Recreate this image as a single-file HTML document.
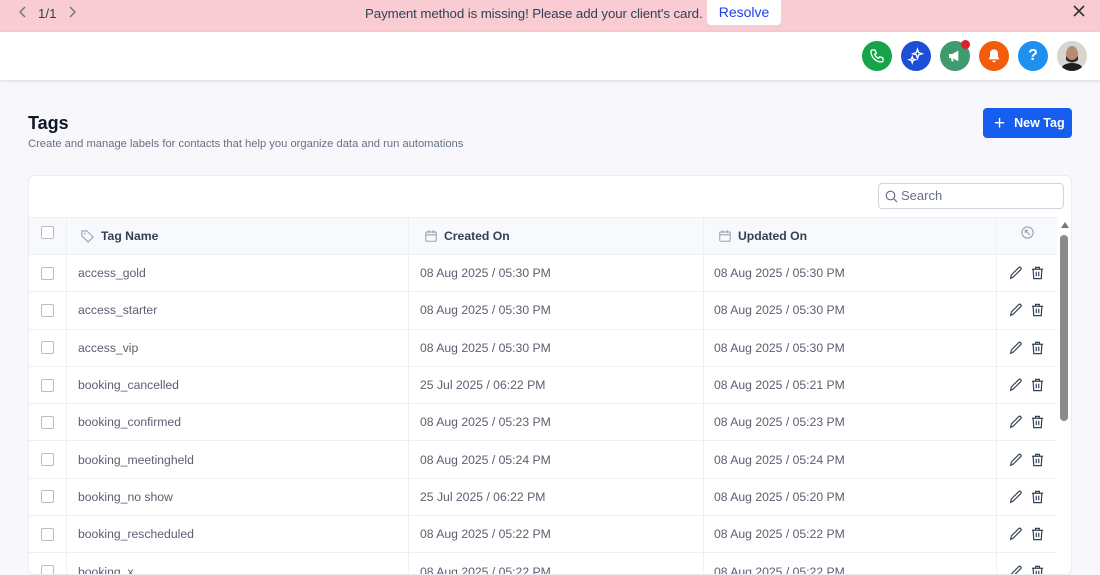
<!DOCTYPE html>
<html><head><meta charset="utf-8"><style>
*{box-sizing:border-box;margin:0;padding:0}
body{width:1100px;height:547px;overflow:hidden;background:#f8f8fc;font-family:"Liberation Sans",sans-serif;position:relative;color:#101828}
.banner{position:absolute;left:0;top:0;width:1100px;height:32px;background:#f9cbd2;font-size:13.3px;color:#344054}
.hdr{position:absolute;left:0;top:32px;width:1100px;height:48px;background:#fff;box-shadow:0 1px 3px rgba(0,0,0,.12)}
.ic{position:absolute;top:9px;width:30px;height:30px;border-radius:50%;display:flex;align-items:center;justify-content:center}
.card{position:absolute;left:28px;top:175px;width:1044px;height:400px;background:#fff;border:1px solid #eaecf0;border-radius:6px;overflow:hidden}
.row{position:absolute;left:0;width:1028px;height:38px;border-bottom:1px solid #eef0f4;font-size:12.2px;color:#5b6070}
.row div{position:absolute;top:0;height:100%;display:flex;align-items:center}
.vl{position:absolute;top:41px;bottom:0;width:1px;background:#eef0f4}
.cb{width:13px;height:13px;border:1px solid #b8bcc6;border-radius:2px;background:#fff}
</style></head><body>
<div class="banner">
<svg style="position:absolute;left:18px;top:5px" width="10" height="14" viewBox="0 0 10 14"><path d="M7 2L2 7l5 5" stroke="#667085" stroke-width="1.3" fill="none"/></svg>
<span style="position:absolute;left:38px;top:6px">1/1</span>
<svg style="position:absolute;left:67px;top:5px" width="10" height="14" viewBox="0 0 10 14"><path d="M3 2l5 5-5 5" stroke="#667085" stroke-width="1.3" fill="none"/></svg>
<span style="position:absolute;left:365px;top:6px;letter-spacing:-0.1px">Payment method is missing! Please add your client's card.</span>
<div style="position:absolute;left:707px;top:0;width:74px;height:25px;background:#fff;border-radius:0 0 4px 4px;color:#1e40f0;font-size:14px;text-align:center;line-height:24px">Resolve</div>
<svg style="position:absolute;left:1072px;top:4px" width="14" height="14" viewBox="0 0 14 14"><path d="M2 2l10 10M12 2L2 12" stroke="#333" stroke-width="1.6"/></svg>
</div>
<div class="hdr">
<div class="ic" style="left:862px;background:#16a34a"><svg width="16" height="16" viewBox="0 0 24 24"><path d="M5 3h4l2 5-2.5 1.5a11 11 0 0 0 6 6L16 13l5 2v4a2 2 0 0 1-2 2A16 16 0 0 1 3 5a2 2 0 0 1 2-2" fill="none" stroke="#fff" stroke-width="2"/></svg></div>
<div class="ic" style="left:901px;background:#1d4ed8"><svg width="18" height="18" viewBox="0 0 24 24"><path d="M14 3l1.5 4.5L20 9l-4.5 1.5L14 15l-1.5-4.5L8 9l4.5-1.5zM7 13l1 3 3 1-3 1-1 3-1-3-3-1 3-1z" fill="none" stroke="#fff" stroke-width="1.8"/></svg></div>
<div class="ic" style="left:940px;background:#3f9a6e"><svg width="16" height="16" viewBox="0 0 24 24"><path d="M3 9h5l9-5v16l-9-5H3zM6 15l1 5h3l-1-5" fill="#fff"/></svg></div>
<div style="position:absolute;left:961px;top:8px;width:9px;height:9px;border-radius:50%;background:#e11d2a"></div>
<div class="ic" style="left:979px;background:#f25c0a"><svg width="16" height="16" viewBox="0 0 24 24"><path d="M12 2a6 6 0 0 0-6 6v5l-2 4h16l-2-4V8a6 6 0 0 0-6-6zM9.5 19a2.5 2.5 0 0 0 5 0z" fill="#fff"/></svg></div>
<div class="ic" style="left:1018px;background:#1e90f0;color:#fff;font-weight:bold;font-size:16px">?</div>
<div class="ic" style="left:1057px;background:#d8d4cf;overflow:hidden"><svg width="30" height="30" viewBox="0 0 30 30"><ellipse cx="15" cy="13" rx="6" ry="8" fill="#b58c74"/><path d="M9 15q6 8 12 0v4q-6 5-12 0z" fill="#3a2a22"/><path d="M3 30q2-8 12-8t12 8z" fill="#1e1e1e"/></svg></div>
</div>
<div style="position:absolute;left:28px;top:113px;font-size:18px;font-weight:bold;color:#101828">Tags</div>
<div style="position:absolute;left:28px;top:138px;font-size:11.2px;color:#667085">Create and manage labels for contacts that help you organize data and run automations</div>
<div style="position:absolute;left:983px;top:108px;width:89px;height:30px;background:#155eef;border-radius:4px;color:#fff;font-size:12.5px;font-weight:bold;display:flex;align-items:center;padding-left:11px"><span style="font-size:19px;font-weight:normal;margin-right:9px;line-height:1">+</span>New Tag</div>
<div class="card">
<div style="position:absolute;left:849px;top:7px;width:186px;height:26px;border:1px solid #d0d5dd;border-radius:4px;font-size:13px;color:#667085;padding-left:22px;line-height:24px">Search
<svg style="position:absolute;left:6px;top:6px" width="13" height="13" viewBox="0 0 13 13"><circle cx="5.5" cy="5.5" r="4.3" stroke="#667085" fill="none" stroke-width="1.2"/><path d="M9 9l3 3" stroke="#667085" stroke-width="1.2"/></svg></div>
<div class="row" style="top:41px;height:38px;background:#f8f9fc;font-weight:bold;color:#344054;font-size:12.2px;border-top:1px solid #eef0f4">
<div style="left:12px;top:-4px"><span class="cb"></span></div>
<div style="left:51px"><svg width="15" height="15" viewBox="0 0 24 24" style="margin-right:6px"><path d="M3 3h8l10 10-8 8L3 11z" fill="none" stroke="#98a2b3" stroke-width="1.8"/><circle cx="7.5" cy="7.5" r="1.3" fill="#98a2b3"/></svg>Tag Name</div>
<div style="left:395px"><svg width="14" height="14" viewBox="0 0 24 24" style="margin-right:6px"><rect x="3" y="5" width="18" height="16" rx="2" fill="none" stroke="#98a2b3" stroke-width="1.8"/><path d="M3 10h18M8 2v5M16 2v5" stroke="#98a2b3" stroke-width="1.8"/></svg>Created On</div>
<div style="left:689px"><svg width="14" height="14" viewBox="0 0 24 24" style="margin-right:6px"><rect x="3" y="5" width="18" height="16" rx="2" fill="none" stroke="#98a2b3" stroke-width="1.8"/><path d="M3 10h18M8 2v5M16 2v5" stroke="#98a2b3" stroke-width="1.8"/></svg>Updated On</div>
<div style="left:991px;top:-4px"><svg width="15" height="15" viewBox="0 0 24 24"><circle cx="12" cy="12" r="9" fill="none" stroke="#98a2b3" stroke-width="1.8"/><path d="M16 16L8.5 8.5M8.5 13V8.5H13" fill="none" stroke="#98a2b3" stroke-width="1.8"/></svg></div>
</div>
<div class="vl" style="left:37px"></div><div class="vl" style="left:379px"></div><div class="vl" style="left:674px"></div><div class="vl" style="left:967px"></div>
<div id="rows"></div>
<div style="position:absolute;left:1032px;top:46px;width:0;height:0;border-left:4px solid transparent;border-right:4px solid transparent;border-bottom:6px solid #777"></div>
<div style="position:absolute;left:1031px;top:59px;width:8px;height:186px;background:#8a8a8a;border-radius:4px"></div>
</div>
<script>
var d=[["access_gold","08 Aug 2025 / 05:30 PM","08 Aug 2025 / 05:30 PM"],["access_starter","08 Aug 2025 / 05:30 PM","08 Aug 2025 / 05:30 PM"],["access_vip","08 Aug 2025 / 05:30 PM","08 Aug 2025 / 05:30 PM"],["booking_cancelled","25 Jul 2025 / 06:22 PM","08 Aug 2025 / 05:21 PM"],["booking_confirmed","08 Aug 2025 / 05:23 PM","08 Aug 2025 / 05:23 PM"],["booking_meetingheld","08 Aug 2025 / 05:24 PM","08 Aug 2025 / 05:24 PM"],["booking_no show","25 Jul 2025 / 06:22 PM","08 Aug 2025 / 05:20 PM"],["booking_rescheduled","08 Aug 2025 / 05:22 PM","08 Aug 2025 / 05:22 PM"],["booking_x","08 Aug 2025 / 05:22 PM","08 Aug 2025 / 05:22 PM"]];
var h="";d.forEach(function(r,i){var t=79+i*37.3;
h+='<div class="row" style="top:'+t+'px;height:37.3px"><div style="left:12px"><span class="cb"></span></div><div style="left:49px">'+r[0]+'</div><div style="left:391px">'+r[1]+'</div><div style="left:685px">'+r[2]+'</div><div style="left:979px"><svg width="16" height="16" viewBox="0 0 24 24"><path d="M4 20l1-5L16 4a2.1 2.1 0 0 1 3 3L8 18z" fill="none" stroke="#344054" stroke-width="1.8"/></svg><svg style="margin-left:6px" width="15" height="16" viewBox="0 0 24 24"><path d="M3 6h18M9 6V3h6v3M5 6l1 15h12l1-15M10 10v7M14 10v7" fill="none" stroke="#344054" stroke-width="1.9"/></svg></div></div>';});
document.getElementById("rows").innerHTML=h;
</script>
</body></html>
